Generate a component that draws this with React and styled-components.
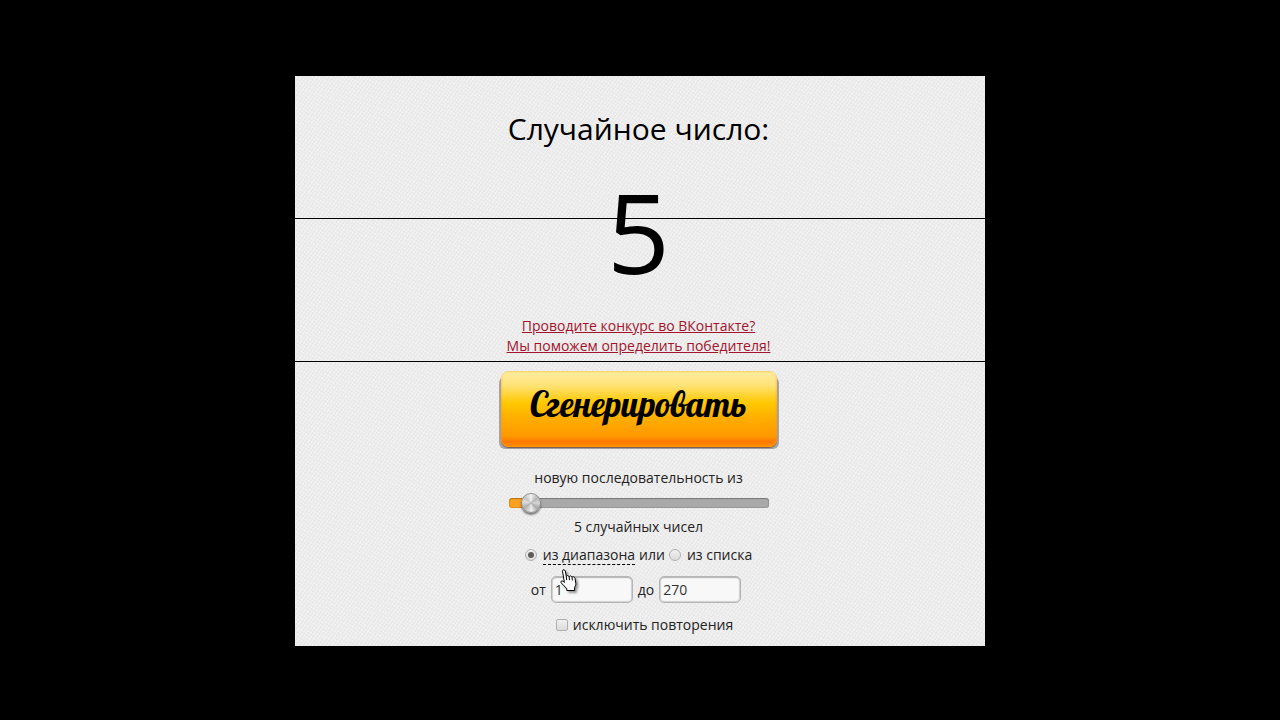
import { useState } from "react";
import styled, { createGlobalStyle } from "styled-components";

const GlobalStyle = createGlobalStyle`
  * {
    box-sizing: border-box;
  }
  body {
    margin: 0;
    background-color: #000;
    color: #222;
    font-family: "Open Sans", "Noto Sans", sans-serif;
    font-size: 14px;
    line-height: 20px;
  }
`;

const Page = styled.div`
  display: flex;
  align-items: center;
  justify-content: center;
  min-height: 100vh;
  padding: 26px 24px 24px;
`;

const Panel = styled.main`
  display: flex;
  flex-direction: column;
  align-items: center;
  width: 100%;
  max-width: 690px;
  padding: 32px 3px 11px 0;
  background-color: #ececec;
  background-image: linear-gradient(#000, #000), linear-gradient(#000, #000),
    repeating-linear-gradient(
      37deg,
      rgba(0, 0, 0, 0.02) 0 1px,
      transparent 1px 3px
    ),
    repeating-linear-gradient(
      -53deg,
      rgba(255, 255, 255, 0.35) 0 1px,
      transparent 1px 3px
    );
  background-size: 100% 1px, 100% 1px, auto, auto;
  background-position: 0 25%, 0 50%, 0 0, 0 0;
  background-repeat: no-repeat, no-repeat, repeat, repeat;
`;

const Title = styled.h1`
  margin: 0;
  color: #000;
  font-size: 30px;
  font-weight: 400;
  line-height: 42px;
`;

const Result = styled.output`
  margin-top: 6px;
  color: #000;
  font-size: 110px;
  line-height: 150px;
`;

const Promo = styled.a`
  margin-top: 10px;
  color: #a3142c;
  text-align: center;
`;

const GenerateButton = styled.button`
  width: 276px;
  height: 76px;
  margin-top: 15px;
  padding: 0 0 10px;
  border: none;
  border-radius: 8px;
  background: linear-gradient(
    #f3d765 0%,
    #ffeb9c 3%,
    #ffe37a 18%,
    #ffc800 42%,
    #ffae00 62%,
    #ff9800 86%,
    #ff7800 93%,
    #ff8a00 100%
  );
  box-shadow: inset 0 -2px 3px rgba(255, 150, 0, 0.7), 0 1px 1px #7a5a48,
    -4px 4px 0 -2px #a8a6a8, 4px 4px 0 -2px #a8a6a8;
  color: #000;
  font-family: Lobster, "Liberation Serif", serif;
  font-size: 35px;
  cursor: pointer;
`;

const Form = styled.form`
  display: flex;
  flex-direction: column;
  align-items: center;
  margin-top: 21px;
`;

const Range = styled.input`
  appearance: none;
  width: 260px;
  height: 10px;
  margin: 10px 0 9px;
  border-radius: 3px;
  background: linear-gradient(
    to right,
    #fba01f ${({ $fill }) => $fill}%,
    #a9a9a9 ${({ $fill }) => $fill}%
  );
  box-shadow: inset 0 1px 1px rgba(0, 0, 0, 0.2),
    inset 0 0 0 1px rgba(0, 0, 0, 0.1);

  &::-webkit-slider-thumb {
    appearance: none;
    width: 20px;
    height: 20px;
    border: 1px solid #909090;
    border-radius: 50%;
    background: conic-gradient(
      #f2f2f2,
      #b5b5b5 50deg,
      #d8d8d8 90deg,
      #a9a9a9 130deg,
      #ededed 175deg,
      #b0b0b0 235deg,
      #dedede 280deg,
      #c4c4c4 310deg,
      #f2f2f2
    );
    box-shadow: 0 2px 2px rgba(0, 0, 0, 0.5);
  }
`;

const Row = styled.div`
  display: flex;
  align-items: center;
  margin-top: ${({ $top }) => $top}px;
  padding: 0 ${({ $right }) => $right || 0}px 0 ${({ $left }) => $left || 0}px;
`;

const Toggle = styled.input`
  appearance: none;
  display: grid;
  place-items: center;
  width: 12px;
  height: 12px;
  margin: 0 6px 0 0;
  border: 1px solid #b0b0b0;
  border-radius: ${({ type }) => (type === "radio" ? "50%" : "2px")};
  background: linear-gradient(#f0f0f0, #dcdcdc);

  &[type="radio"]:checked::before {
    content: "";
    width: 6px;
    height: 6px;
    border-radius: 50%;
    background-color: #5c5c5c;
  }

  &[type="checkbox"] {
    margin-right: 5px;
  }

  &[type="checkbox"]:checked::before {
    content: "✓";
    font-size: 11px;
  }
`;

const RangeLabel = styled.label`
  position: relative;
  height: 20px;
  border-bottom: 1px dashed #000;
`;

const Word = styled.span`
  margin: 0 4px;
`;

const NumberInput = styled.input`
  width: 82px;
  height: 27px;
  margin-left: 5px;
  padding: 0 3px;
  border: 1px solid #b4b4b4;
  border-radius: 5px;
  background-color: #f8f8f8;
  box-shadow: inset 0 1px 1px #b8b8b8, inset 0 0 1px 1px #d0d0d0;
  color: #333;
  font: inherit;

  & + label {
    margin-left: 5px;
  }
`;

const Pointer = styled.svg`
  position: absolute;
  z-index: 1;
  top: 24px;
  left: 17px;
  width: 18px;
  height: 24px;
  filter: drop-shadow(2px 2px 1px rgba(0, 0, 0, 0.4));
  pointer-events: none;
`;

function HandPointer() {
  return (
    <Pointer viewBox="0 0 18 24" aria-hidden="true">
      <path
        d="M2.5 2.2C2.5.3 5 .3 5.3 2l1 5.600c.3-1.400 2.400-1.400 2.800.2.5-1.300 2.500-1.100 2.900.5.7-1 2.600-.6 3 1l.8 5c.2 2-.8 3-1.200 4.300V21.500H6.800v-1.900C4.800 17.800 3 15.700 1.200 13.800c-1-1.300.5-2.600 1.900-1.500l1.300 1.100z"
        fill="#fff"
        stroke="#000"
        strokeLinejoin="round"
      />
      <path
        d="M6.300 7.600l.4 3.600M9.100 7.800l.4 3.400M12 8.300l.4 3.200"
        stroke="#000"
        fill="none"
      />
    </Pointer>
  );
}

const MIN_COUNT = 1;
const MAX_COUNT = 80;

function App() {
  const [result, setResult] = useState(5);
  const [count, setCount] = useState(5);
  const [source, setSource] = useState("range");
  const [from, setFrom] = useState("1");
  const [to, setTo] = useState("270");
  const [unique, setUnique] = useState(false);

  function generate() {
    const min = Number(from);
    const max = Number(to);
    setResult(Math.floor(Math.random() * (max - min + 1)) + min);
  }

  // keep the coloured part under the middle of the thumb
  const fill = ((count - MIN_COUNT) / (MAX_COUNT - MIN_COUNT)) * 92 + 4;

  return (
    <>
      <GlobalStyle />
      <Page>
        <Panel>
          <Title>Случайное число:</Title>
          <Result>{result}</Result>
          <Promo href="#contest">
            Проводите конкурс во ВКонтакте?
            <br />
            Мы поможем определить победителя!
          </Promo>
          <GenerateButton type="button" onClick={generate}>
            Сгенерировать
          </GenerateButton>
          <Form>
            <label htmlFor="count">новую последовательность из</label>
            <Range
              id="count"
              type="range"
              min={MIN_COUNT}
              max={MAX_COUNT}
              value={count}
              $fill={fill}
              onChange={(e) => setCount(Number(e.target.value))}
            />
            <label htmlFor="count">{count} случайных чисел</label>
            <Row $top={8}>
              <Toggle
                type="radio"
                id="source-range"
                name="source"
                checked={source === "range"}
                onChange={() => setSource("range")}
              />
              <RangeLabel htmlFor="source-range">
                из диапазона
                <HandPointer />
              </RangeLabel>
              <Word>или</Word>
              <Toggle
                type="radio"
                id="source-list"
                name="source"
                checked={source === "list"}
                onChange={() => setSource("list")}
              />
              <label htmlFor="source-list">из списка</label>
            </Row>
            <Row $top={11} $right={5}>
              <label htmlFor="from">от</label>
              <NumberInput
                id="from"
                value={from}
                onChange={(e) => setFrom(e.target.value)}
              />
              <label htmlFor="to">до</label>
              <NumberInput
                id="to"
                value={to}
                onChange={(e) => setTo(e.target.value)}
              />
            </Row>
            <Row $top={12} $left={12}>
              <Toggle
                type="checkbox"
                id="unique"
                checked={unique}
                onChange={(e) => setUnique(e.target.checked)}
              />
              <label htmlFor="unique">исключить повторения</label>
            </Row>
          </Form>
        </Panel>
      </Page>
    </>
  );
}

export default App;
